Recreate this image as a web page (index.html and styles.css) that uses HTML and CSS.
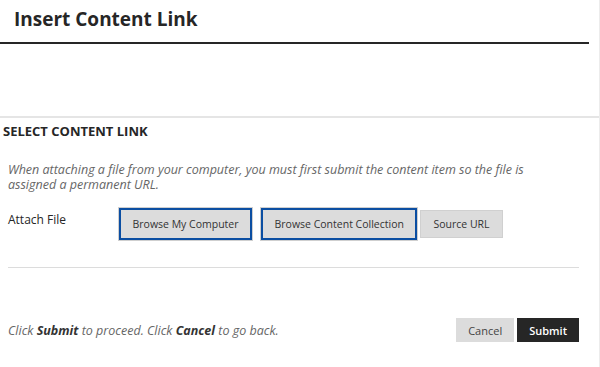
FILE: index.html
```html
<!DOCTYPE html>
<html lang="en">
<head>
    <meta charset="UTF-8">
    <title>Insert Content Link</title>
    <link rel="stylesheet" href="styles.css">
</head>
<body>
    <div class="page">
        <div class="page-header">
            <h1>Insert Content Link</h1>
        </div>

        <div class="page-spacer"></div>

        <div class="section">
            <h2 class="section-title">Select Content Link</h2>
            <p class="instructions">When attaching a file from your computer, you must first submit the content item so the file is assigned a permanent URL.</p>

            <div class="field-row">
                <label class="field-label">Attach File</label>
                <div class="field-buttons">
                    <button class="browse-btn focused first">Browse My Computer</button>
                    <button class="browse-btn focused">Browse Content Collection</button>
                    <button class="browse-btn">Source URL</button>
                </div>
            </div>
        </div>

        <div class="submit-bar">
            <p class="submit-hint">Click <strong>Submit</strong> to proceed. Click <strong>Cancel</strong> to go back.</p>
            <div class="submit-actions">
                <button class="cancel-btn">Cancel</button>
                <button class="submit-btn">Submit</button>
            </div>
        </div>
    </div>
</body>
</html>
```

FILE: styles.css
```css
body {
    font-family: "Open Sans", "Noto Sans", Arial, sans-serif;
    margin: 0;
    padding: 0;
    background: white;
    color: #262626;
}

.page {
    width: 599px;
    height: 367px;
    border-right: 1px solid #ececec;
}

.page-header {
    height: 44px;
    margin-right: 10px;
    border-bottom: 2px solid #262626;
    box-sizing: border-box;
    padding: 6px 14px 0;
}

.page-header h1 {
    margin: 0;
    font-size: 19px;
    font-weight: 700;
    line-height: 26px;
}

.page-spacer {
    height: 72px;
}

.section {
    border-top: 2px solid #e5e5e5;
    padding: 5px 20px 0 3px;
}

.section-title {
    margin: 0;
    font-size: 13px;
    font-weight: 700;
    line-height: 17px;
    text-transform: uppercase;
}

.instructions {
    margin: 22px 0 0 5px;
    max-width: 545px;
    font-size: 12.5px;
    line-height: 15px;
    font-style: italic;
    color: #666;
}

.field-row {
    display: flex;
    margin: 15px 0 0 5px;
    padding-bottom: 26px;
    border-bottom: 1px solid #dcdcdc;
}

.field-label {
    width: 110px;
    font-size: 12px;
    line-height: 17px;
    padding-top: 4px;
}

.field-buttons {
    display: flex;
    align-items: center;
    gap: 2px;
}

.browse-btn {
    font-family: inherit;
    font-size: 10.5px;
    color: #333;
    background: #dcdcdc;
    border: 1px solid #d0d0d0;
    padding: 0 12px;
    height: 28px;
    margin: 0;
}

.browse-btn.focused {
    height: 34px;
    padding: 0 13.5px;
    border: 1px solid #cfcfcf;
    outline: 2px solid #0b4ea2;
    outline-offset: -3px;
}

.browse-btn.first {
    margin-right: 5px;
}

.submit-bar {
    display: flex;
    justify-content: space-between;
    align-items: center;
    margin: 50px 20px 0 8px;
}

.submit-hint {
    margin: 0;
    font-size: 12.5px;
    font-style: italic;
    color: #666;
}

.submit-hint strong {
    color: #333;
}

.submit-actions {
    display: flex;
    gap: 3px;
}

.submit-actions button {
    font-family: inherit;
    font-size: 11px;
    height: 24px;
    border: 1px solid transparent;
    padding: 0 11px;
}

.cancel-btn {
    background: #dcdcdc;
    color: #444;
}

.submit-btn {
    background: #262626;
    color: white;
    font-weight: 600;
    padding: 0 12px;
}
```
